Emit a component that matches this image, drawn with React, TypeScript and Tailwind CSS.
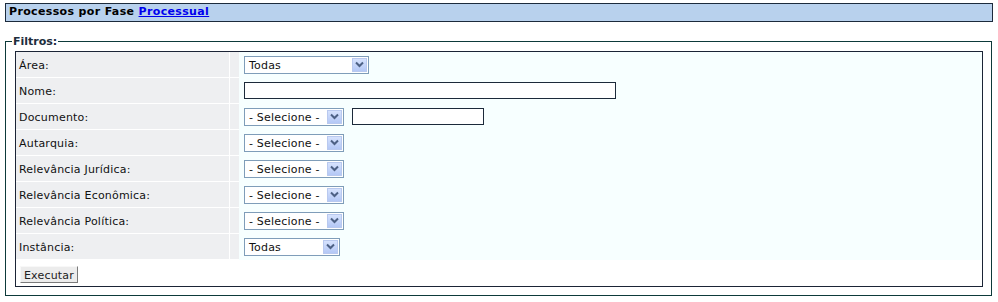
import React from 'react';

const Arrow = () => (
  <span className="ml-auto mr-px flex h-[14px] w-[15px] items-center justify-center border border-[#b9c9ef] bg-gradient-to-b from-[#d6e2fd] to-[#b4c8f6]">
    <svg width="9" height="7" viewBox="0 0 9 7">
      <polyline points="1,1.5 4.5,5 8,1.5" fill="none" stroke="#4d6185" strokeWidth="2" />
    </svg>
  </span>
);

const Select = ({ value, width }: { value: string; width: string }) => (
  <div className={`flex h-[18px] items-center border border-[#7f9db9] bg-white ${width}`}>
    <span className="pl-[4px] pt-[2px] leading-none tracking-[0.2px]">{value}</span>
    <Arrow />
  </div>
);

const TextBox = ({ width }: { width: string }) => (
  <div className={`h-[17px] border border-[#1c2a3a] bg-white ${width}`} />
);

const rows: { label: string; field: React.ReactNode }[] = [
  { label: 'Área:', field: <Select value="Todas" width="w-[125px]" /> },
  { label: 'Nome:', field: <TextBox width="w-[372px]" /> },
  {
    label: 'Documento:',
    field: (
      <div className="flex items-center gap-[8px]">
        <Select value="- Selecione -" width="w-[100px]" />
        <TextBox width="w-[132px]" />
      </div>
    ),
  },
  { label: 'Autarquia:', field: <Select value="- Selecione -" width="w-[100px]" /> },
  { label: 'Relevância Jurídica:', field: <Select value="- Selecione -" width="w-[100px]" /> },
  { label: 'Relevância Econômica:', field: <Select value="- Selecione -" width="w-[100px]" /> },
  { label: 'Relevância Política:', field: <Select value="- Selecione -" width="w-[100px]" /> },
  { label: 'Instância:', field: <Select value="Todas" width="w-[96px]" /> },
];

export default function App() {
  return (
    <div className="h-[302px] w-[998px] bg-white px-[5px] pt-[3px] font-['Verdana','DejaVu_Sans',sans-serif] text-[11px] text-[#111]">
      {/* Title bar */}
      <div className="flex h-[19px] w-[988px] items-center border border-[#1c2b3c] bg-[#b8d1ed] pl-[3px] font-bold tracking-[0.35px] text-black">
        Processos por Fase&nbsp;
        <a href="#" className="text-[#0000ee] underline">
          Processual
        </a>
      </div>

      {/* Filters */}
      <fieldset className="mt-[13px] w-[987px] border border-[#0d3a3a] pb-[8px] pl-[9px] pr-[8px]">
        <legend className="-ml-[3px] px-px font-bold leading-[13px] text-[#1d2d3d]">Filtros:</legend>
        <div className="mt-[3px] border border-[#1b2436] bg-white">
          {rows.map((r) => (
            <div key={r.label} className="flex h-[26px] bg-[#f7ffff]">
              <div className="flex w-[214px] items-center border-b border-r border-white bg-[#eeeff1] pl-[3px] pt-[4px] tracking-[0.2px]">
                {r.label}
              </div>
              <div className="w-[9px] border-b border-white bg-[#eeeff1]" />
              <div className="flex items-center pb-px pl-[5px]">{r.field}</div>
            </div>
          ))}
          <div className="flex h-[26px] items-center pl-[4px]">
            <button className="mt-[2px] h-[17px] w-[58px] border border-b-[#7a7a7a] border-l-[#f8f8f8] border-r-[#7a7a7a] border-t-[#f8f8f8] bg-[#ececec] pt-[2px] text-[11px] leading-none tracking-[0.2px] text-[#222]">
              Executar
            </button>
          </div>
        </div>
      </fieldset>
    </div>
  );
}
